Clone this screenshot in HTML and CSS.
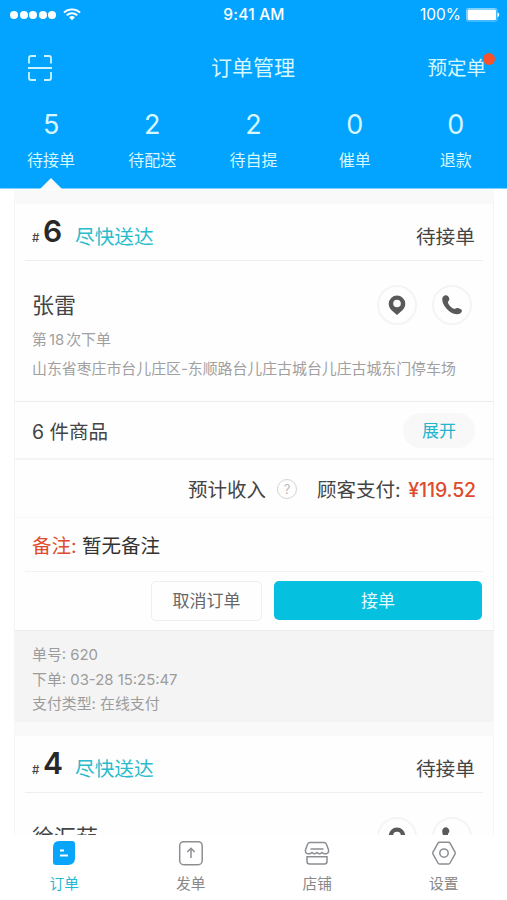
FILE: index.html
```html
<!DOCTYPE html>
<html lang="zh-CN">
<head>
<meta charset="utf-8">
<title>订单管理</title>
<link rel="stylesheet" href="styles.css">
</head>
<body>
<svg class="defs" width="0" height="0" aria-hidden="true">
  <symbol id="pin" viewBox="0 0 18 20"><path fill-rule="evenodd" d="M9 .5a8.3 8.3 0 0 0-8.3 8.2c0 3.300 1.700 5.700 4 7.500L9 20l4.300-3.800c2.300-1.800 4-4.200 4-7.500A8.300 8.300 0 0 0 9 .5zM9 4.700a3.800 3.800 0 1 1 0 7.600 3.800 3.800 0 0 1 0-7.600z"/></symbol>
  <symbol id="phone" viewBox="0 0 20 20"><path d="M1.200 1.500C2.500.2 4.600-.1 5.800.9c1.400 1.200 1.900 3 1.300 4.300-.4.900-1.200 1.300-1.200 2.100 0 1 1.400 3.200 3.100 4.600 1.600 1.400 3.200 2.200 4.200 1.900.8-.2 1.200-.9 2.300-.8 1.500.1 3.500 1 4.200 2 .6.900-.3 2.700-1.600 3.500-2.300 1.500-7 .9-11.200-2.400C3.300 12.900.6 8.700.3 5.300.1 3.600.3 2.300 1.200 1.500z"/></symbol>
</svg>
<div class="screen">
  <header class="header">
    <div class="status">
      <div class="signal">
        <i></i><i></i><i></i><i></i><i></i>
        <svg class="wifi" width="18" height="13" viewBox="0 0 17 13" preserveAspectRatio="none" fill="none" stroke="#fff" stroke-width="1.800"><path d="M.9 4.500a10.800 10.800 0 0 1 15.200 0M3.500 7.300a7.100 7.100 0 0 1 10 0"/><path d="M5.700 9.300a4 4 0 0 1 5.600 0L8.500 12.300z" fill="#fff" stroke="none"/></svg>
      </div>
      <span class="time">9:41 AM</span>
      <div class="power"><span>100%</span>
        <svg width="34" height="14" viewBox="0 0 34 14"><rect x=".5" y=".5" width="30.500" height="12.500" rx="1.500" fill="none" stroke="#7fcfff"/><rect x="1.500" y="1.500" width="28.500" height="10.500" rx="1" fill="#fff"/><path d="M31.500 4.500c2.300.7 2.300 4 0 4.700z" fill="#fff"/></svg>
      </div>
    </div>
    <div class="nav">
      <svg class="scan" width="24" height="26" viewBox="0 0 24 26" fill="none" stroke="#c9f4ff" stroke-width="1.800"><path d="M1 8.500V3q0-2 2-2h5M16 1h5q2 0 2 2v5.500M1 17v6q0 2 2 2h5M16 25h5q2 0 2-2v-6M0 13h24"/></svg>
      <h1>订单管理</h1>
      <span class="reserve">预定单<i class="dot"></i></span>
    </div>
    <div class="tabs">
      <div class="tab active"><b>5</b><span>待接单</span></div>
      <div class="tab"><b>2</b><span>待配送</span></div>
      <div class="tab"><b>2</b><span>待自提</span></div>
      <div class="tab"><b>0</b><span>催单</span></div>
      <div class="tab"><b>0</b><span>退款</span></div>
    </div>
  </header>
  <main class="orders">
    <article class="card">
      <div class="card-head"><small>#</small><strong>6</strong><span class="asap">尽快送达</span><span class="state">待接单</span></div>
      <div class="customer">
        <div class="person"><h2>张雷</h2>
          <div class="round"><svg width="18" height="20"><use href="#pin"/></svg></div>
          <div class="round"><svg width="20" height="20"><use href="#phone"/></svg></div>
        </div>
        <p class="times">第<span>18</span>次下单</p>
        <p class="address">山东省枣庄市台儿庄区-东顺路台儿庄古城台儿庄古城东门停车场</p>
      </div>
      <div class="goods"><span>6 件商品</span><span class="expand">展开</span></div>
      <div class="income"><span>预计收入</span><i class="help">?</i><span class="pay">顾客支付: <em>¥119.52</em></span></div>
      <div class="remark"><em>备注:</em> 暂无备注</div>
      <div class="actions"><div class="cancel">取消订单</div><div class="accept">接单</div></div>
      <div class="meta"><p>单号: 620</p><p>下单: 03-28 15:25:47</p><p>支付类型: 在线支付</p></div>
    </article>
    <article class="card">
      <div class="card-head"><small>#</small><strong>4</strong><span class="asap">尽快送达</span><span class="state">待接单</span></div>
      <div class="customer">
        <div class="person"><h2>徐汇茹</h2>
          <div class="round"><svg width="18" height="20"><use href="#pin"/></svg></div>
          <div class="round"><svg width="20" height="20"><use href="#phone"/></svg></div>
        </div>
      </div>
    </article>
  </main>
  <nav class="bottom">
    <div class="item on"><svg width="26" height="26" viewBox="0 0 26 26"><path d="M8 1h13q3 0 3 3v14q0 7-7 7H5q-3 0-3-3V8q0-7 6-7z" fill="#08a5fb"/><path d="M9 10.500h4M9 15.500h8" stroke="#fff" stroke-width="1.800"/></svg><span>订单</span></div>
    <div class="item"><svg width="26" height="26" viewBox="0 0 26 26" fill="none" stroke="#8c8f92" stroke-width="1.500"><rect x="1.700" y="1.700" width="22.500" height="23" rx="4"/><path d="M13 18V8.500M9.300 12L13 8.300l3.700 3.700"/></svg><span>发单</span></div>
    <div class="item"><svg width="26" height="26" viewBox="0 0 26 26" fill="none" stroke="#8c8f92" stroke-width="1.500"><path d="M6 2.500h14q1.700 0 2.400 1.700l2 5.300q.8 3-1.400 4-3 1-5-1-2.500 2.500-5 0-2.500 2.500-5 0-2 2-5 1-2.200-1-1.400-4l2-5.300Q4.300 2.500 6 2.500zM6.500 9h13M3 16.800h20v4.700q0 2.500-2.500 2.500h-15Q3 24 3 21.500z"/></svg><span>店铺</span></div>
    <div class="item"><svg width="26" height="26" viewBox="0 0 26 26" fill="none" stroke="#8c8f92" stroke-width="1.500"><path d="M8.500 2.300h9q1 0 1.500.9l5 8.900q.5 1 0 2l-5 8.900q-.5.900-1.500.900h-9q-1 0-1.500-.9l-5-8.900q-.5-1 0-2l5-8.900q.5-.9 1.500-.9z"/><circle cx="13" cy="13.100" r="4.200"/></svg><span>设置</span></div>
  </nav>
</div>
</body>
</html>
```
FILE: styles.css
```css
* { box-sizing: border-box; margin: 0; padding: 0; }
body { font-family: Inter, "Noto Sans CJK SC", sans-serif; color: #444; background: #fff; }
i, em { font-style: normal; }
h1, h2 { font-weight: 400; }
svg { display: block; flex: none; }
.defs { position: absolute; }
.screen { width: 507px; height: 900px; overflow: hidden; display: flex; flex-direction: column; }

.header { flex: none; height: 189px; background: #03a4ff; color: #d5f7ff; border-bottom: 1px solid #7dd0ff; display: flex; flex-direction: column; }
.status { height: 28px; display: grid; grid-template-columns: 1fr auto 1fr; align-items: center; padding: 1px 7px 0 8px; color: #fff; font-size: 15.500px; }
.signal { display: flex; gap: 1.500px; align-items: center; padding-left: 2px; }
.signal i { width: 8px; height: 8px; border-radius: 50%; background: #fff; }
.wifi { margin-left: 5px; }
.time { letter-spacing: .2px; font-weight: 500; }
.power { display: flex; justify-content: flex-end; align-items: center; gap: 5px; }
.nav { height: 79px; display: grid; grid-template-columns: 1fr auto 1fr; align-items: center; padding: 0 21px 0 28px; }
.nav h1 { font-size: 21px; line-height: 30px; transform: translateX(-4px); }
.reserve { justify-self: end; position: relative; font-size: 19.500px; line-height: 30px; }
.dot { position: absolute; width: 12px; height: 12px; border-radius: 50%; background: #f4532c; right: -9px; top: 0; }
.tabs { display: grid; grid-template-columns: repeat(5, 101.200px); padding-left: .5px; flex: 1; }
.tab { display: flex; flex-direction: column; align-items: center; position: relative; }
.tab b { font-weight: 400; font-size: 27px; line-height: 35px; }
.tab span { font-size: 16px; line-height: 24px; margin-top: 6px; }
.active::after { content: ""; position: absolute; bottom: -1px; border: 11px solid transparent; border-top: 0; border-bottom: 11px solid #fafafa; }

.orders { flex: 1; min-height: 0; overflow: hidden; padding: 1px 13px 0 14px; }
.card { border: 1px solid #f5f5f5; border-top: 14px solid #f9f9f9; border-bottom: 0; background: #fefefe; }
.card-head { height: 57px; margin: 0 10px; padding: 0 8px 0 7px; border-bottom: 1px solid #eee; display: flex; align-items: baseline; line-height: 55px; }
.card-head small { font-size: 11.500px; width: 11px; font-weight: 500; }
.card-head strong { font-size: 30px; font-weight: 600; color: #282828; width: 32px; }
.asap, .state { font-size: 19.700px; transform: translateY(2px); }
.asap { color: #2abccc; }
.state { margin-left: auto; color: #444; }
.customer { height: 141px; padding: 24px 21px 0 17px; border-bottom: 1px solid #ebebeb; }
.person { display: flex; align-items: center; gap: 15px; height: 40px; }
.person h2 { font-size: 22px; line-height: 32px; flex: 1; }
.round { width: 40px; height: 40px; border: 2px solid #f4f4f4; border-radius: 50%; display: flex; align-items: center; justify-content: center; fill: #595959; }
.times, .address { color: #a0a0a0; font-size: 14.900px; line-height: 22px; white-space: nowrap; }
.times { margin-top: 4px; }
.times span { margin: 0 2px; }
.address { margin-top: 7px; }
.goods { height: 58px; padding: 0 18px 0 17px; border-bottom: 2px solid #f4f4f4; display: flex; align-items: center; justify-content: space-between; font-size: 19.500px; }
.expand { width: 72px; height: 35px; border-radius: 18px; background: #f8f8f8; color: #22b5cc; font-size: 17px; line-height: 36px; text-align: center; }
.income { height: 58px; padding: 0 17px; border-bottom: 1px solid #f8f8f8; display: flex; align-items: center; justify-content: flex-end; font-size: 19.500px; }
.help { width: 20px; height: 20px; border: 1.500px solid #d4d4d4; border-radius: 50%; margin: 0 20px 0 11px; color: #bbb; font-size: 13px; line-height: 18px; text-align: center; }
.pay { white-space: pre; }
.pay em { margin-left: 2px; font-weight: 500; letter-spacing: -.1px; }
.income em, .remark em { color: #df4b2d; }
.remark { height: 54px; margin: 0 10px; padding-left: 7px; border-bottom: 1px solid #f2f2f2; line-height: 56px; font-size: 19.500px; color: #333; }
.actions { height: 58px; padding: 9px 11px 0; display: flex; justify-content: flex-end; gap: 12px; font-size: 17px; text-align: center; line-height: 39px; }
.cancel { width: 111px; height: 40px; border: 1.500px solid #eee; border-radius: 5px; color: #666; }
.accept { width: 208px; height: 39px; border-radius: 5px; background: #05c0df; color: #e4fbff; line-height: 40px; }
.meta { height: 92px; padding: 12px 17px; background: #f4f4f4; border-top: 1px solid #ececec; color: #9c9c9c; font-size: 14.900px; line-height: 24.500px; }

.bottom { flex: none; height: 65px; background: #fff; display: grid; grid-template-columns: repeat(4, 126.500px); padding-left: 1px; }
.item { display: flex; flex-direction: column; align-items: center; padding-top: 5px; color: #888; font-size: 14.700px; line-height: 22px; gap: 7px; }
.on { color: #28b8d0; }
```
